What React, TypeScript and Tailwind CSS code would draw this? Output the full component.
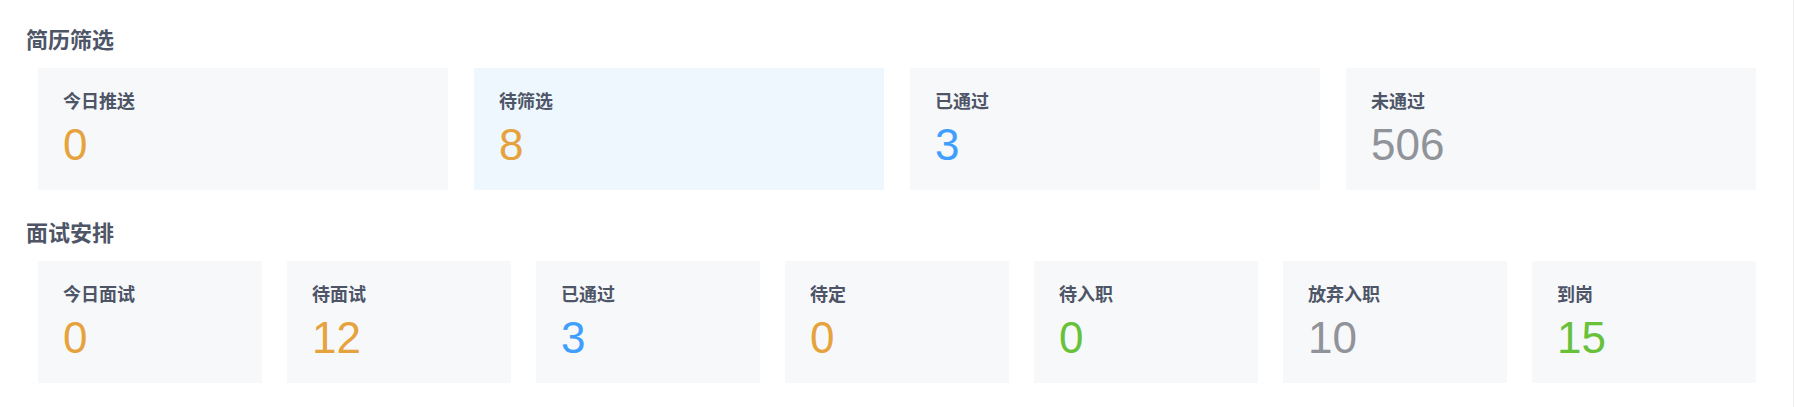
type Stat = {
  label: string;
  value: number;
  color: string;
  active?: boolean;
};

const screening: Stat[] = [
  { label: '今日推送', value: 0, color: 'text-[#e6a23c]' },
  { label: '待筛选', value: 8, color: 'text-[#e6a23c]', active: true },
  { label: '已通过', value: 3, color: 'text-[#409eff]' },
  { label: '未通过', value: 506, color: 'text-[#909399]' },
];

const interview: Stat[] = [
  { label: '今日面试', value: 0, color: 'text-[#e6a23c]' },
  { label: '待面试', value: 12, color: 'text-[#e6a23c]' },
  { label: '已通过', value: 3, color: 'text-[#409eff]' },
  { label: '待定', value: 0, color: 'text-[#e6a23c]' },
  { label: '待入职', value: 0, color: 'text-[#67c23a]' },
  { label: '放弃入职', value: 10, color: 'text-[#909399]' },
  { label: '到岗', value: 15, color: 'text-[#67c23a]' },
];

function StatCard({ stat }: { stat: Stat }) {
  return (
    <div
      className={`h-[122px] pl-[25px] pt-5 cursor-pointer ${
        stat.active ? 'bg-[#eef6fe]' : 'bg-[#f7f8fa]'
      }`}
    >
      <div className="text-[18px] leading-[24px] font-bold text-[#4d5567]">{stat.label}</div>
      <div
        className={`mt-[11px] text-[44px] leading-[44px] ${stat.color}`}
        style={{ fontFamily: '"Liberation Sans", Arial, sans-serif' }}
      >
        {stat.value}
      </div>
    </div>
  );
}

function Section({ title, stats, cols }: { title: string; stats: Stat[]; cols: string }) {
  return (
    <section>
      <h3 className="pl-[26px] text-[22px] leading-[30px] font-bold text-[#4d5567] mb-[15px]">{title}</h3>
      <div className={`grid ${cols} ml-[38px] mr-[37px]`}>
        {stats.map((s) => (
          <StatCard key={s.label + s.value} stat={s} />
        ))}
      </div>
    </section>
  );
}

export default function App() {
  return (
    <div
      className="w-[1794px] min-h-[407px] bg-white border-r border-[#eceef2] pt-[23px]"
      style={{ fontFamily: '"Noto Sans CJK SC", "Noto Sans", sans-serif' }}
    >
      <Section title="简历筛选" stats={screening} cols="grid-cols-4 gap-[26px]" />
      <div className="h-[26px]" />
      <Section title="面试安排" stats={interview} cols="grid-cols-7 gap-[25px]" />
    </div>
  );
}
